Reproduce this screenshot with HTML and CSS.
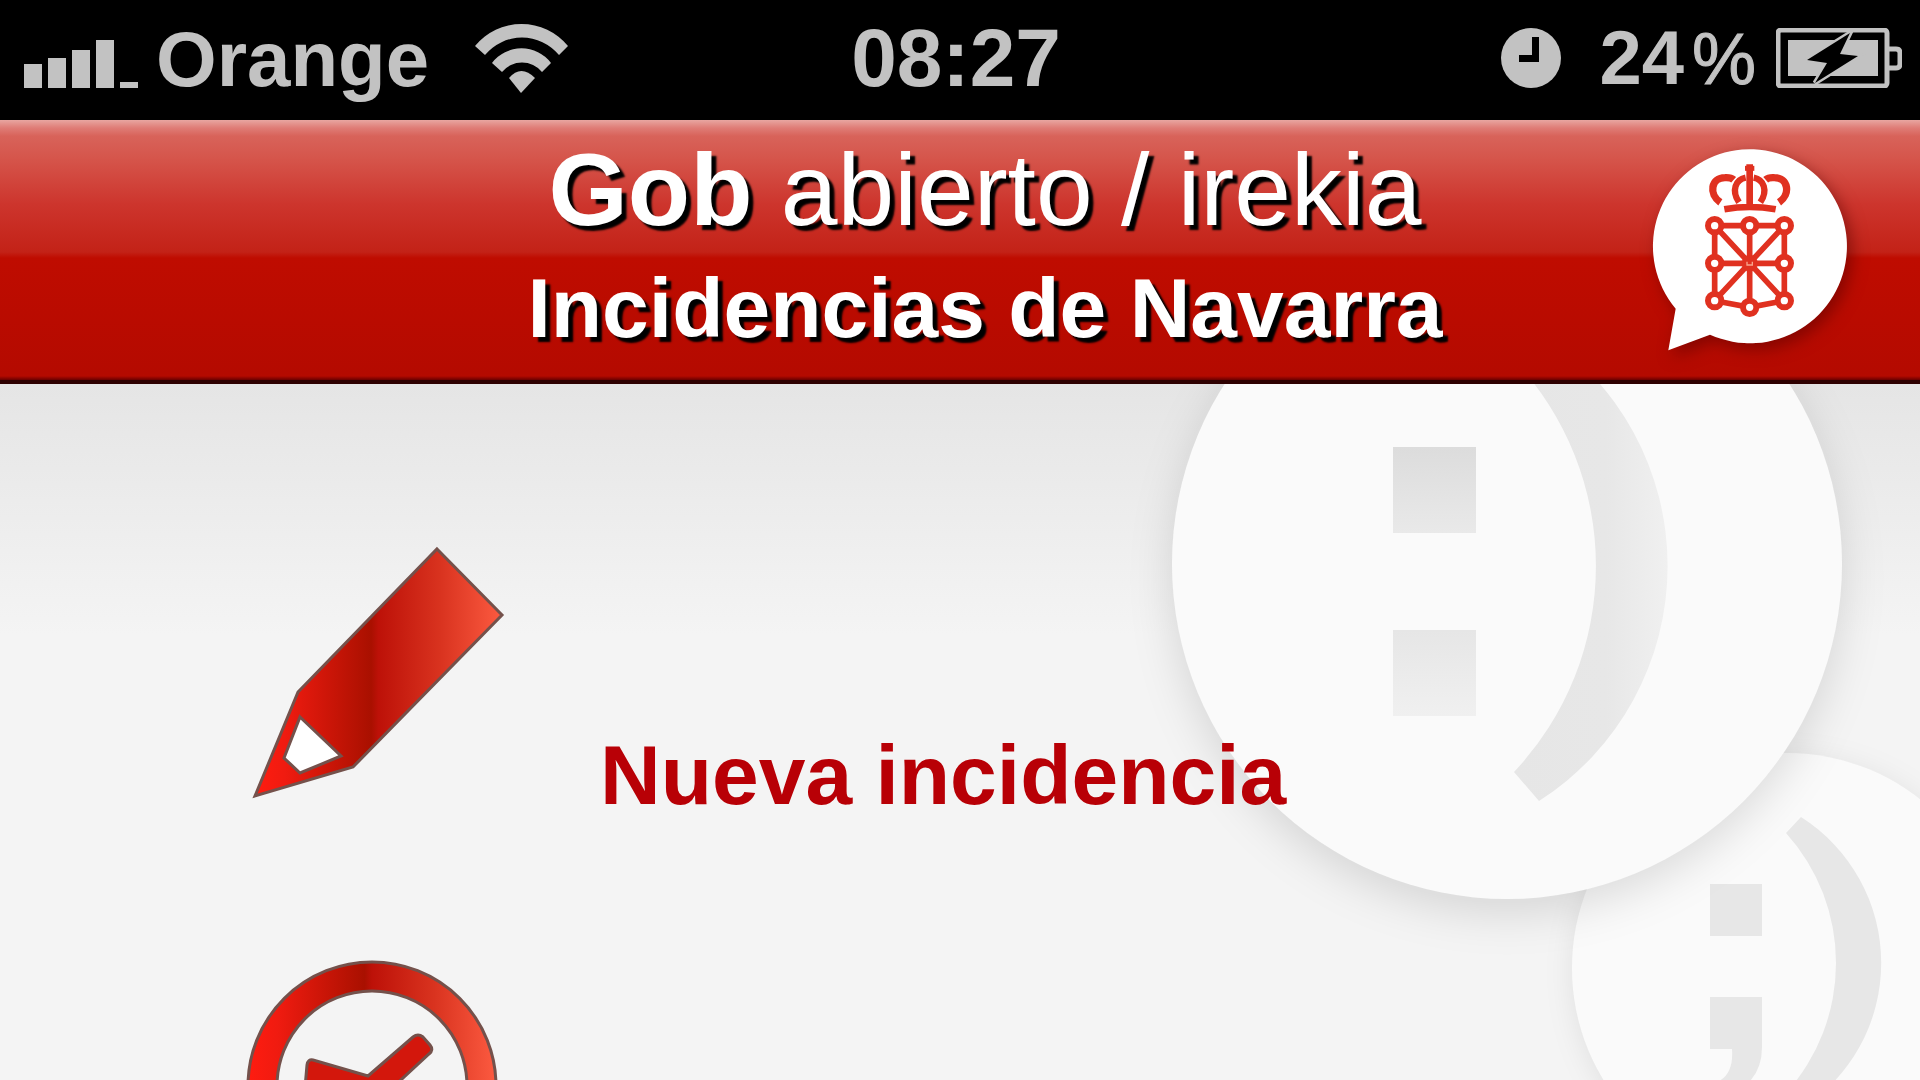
FILE: index.html
```html
<!DOCTYPE html>
<html lang="es">
<head>
    <meta charset="UTF-8">
    <meta name="viewport" content="width=device-width, initial-scale=1.0">
    <title>Incidencias de Navarra</title>
    <link rel="stylesheet" href="styles.css">
</head>
<body>
    <div class="status-bar">
        <div class="status-left">
            <svg class="signal" viewBox="24 27 114 60" aria-hidden="true">
                <path d="M24 63h18v24H24zM48 57h18v30H48zM72 49h18v38H72zM96 39h18v48H96zM120 81h18v6h-18z"/>
            </svg>
            <span class="carrier">Orange</span>
            <svg class="wifi" viewBox="475 24 94 70" aria-hidden="true">
                <path d="M475 47A60 60 0 0 1 568 47L559 56A48 48 0 0 0 485 56z"/>
                <path d="M492 64A37 37 0 0 1 551 64L542 73A26 26 0 0 0 502 73z"/>
                <path d="M509 79Q521 65 535 79L521 94z"/>
            </svg>
        </div>
        <span class="time">08:27</span>
        <div class="status-right">
            <svg class="alarm" viewBox="0 0 60 60" aria-hidden="true">
                <circle cx="30" cy="30" r="30"/>
                <path class="hands" d="M31 9h7v25H18v-7h13z"/>
            </svg>
            <span class="charge">24<span class="percent">%</span></span>
            <svg class="battery" viewBox="1776 27 126 60" aria-hidden="true">
                <rect class="case" x="1778" y="29" width="109" height="56" rx="3"/>
                <path class="case" d="M1889 48h7q4 0 4 4v11q0 4-4 4h-7"/>
                <path d="M1788 39h90v36h-90z"/>
                <path class="bolt-edge" d="M1850 32L1807 59 1827 62 1815 82 1858 55 1840 53z"/>
                <path class="bolt" d="M1850 32L1807 59 1827 62 1815 82 1858 55 1840 53z"/>
            </svg>
        </div>
    </div>

    <header class="header">
        <h1 class="title">
            <span class="brand"><b>Gob</b> abierto / irekia</span>
            <span class="subtitle">Incidencias de Navarra</span>
        </h1>
        <svg class="logo" viewBox="98 83 585 609" role="img" aria-label="Gobierno de Navarra">
            <path class="bubble" d="M172 565A291 291 0 1 1 275 643L150 690z"/>
            <g class="crest">
                <path d="M394 132V252M318 267Q394 253 472 267" stroke-width="20"/>
                <path d="M306 246C270 222 278 172 320 172Q338 171 346 178M482 246C518 222 510 172 468 172Q450 171 442 178" stroke-width="22"/>
                <path d="M362 246C338 210 352 178 382 172M426 246C450 210 436 178 406 172" stroke-width="19"/>
                <path d="M380 144h28" stroke-width="15"/>
                <path d="M289 316H498V541L394 561 289 541zM394 316V561M289 429H498M289 316L498 541M498 316L289 541" stroke-width="17"/>
                <g class="links">
                    <circle cx="289" cy="316" r="20"/>
                    <circle cx="394" cy="316" r="20"/>
                    <circle cx="498" cy="316" r="20"/>
                    <circle cx="289" cy="429" r="20"/>
                    <circle cx="498" cy="429" r="20"/>
                    <circle cx="289" cy="541" r="20"/>
                    <circle cx="394" cy="561" r="20"/>
                    <circle cx="498" cy="541" r="20"/>
                </g>
                <circle class="gem" cx="394" cy="429" r="24"/>
                <path d="M386 424v10h16v-10" stroke="#f7a58d" stroke-width="4"/>
            </g>
        </svg>
    </header>

    <main class="content">
        <svg class="smileys" viewBox="1140 384 780 800" aria-hidden="true">
            <defs>
                <linearGradient id="eye" x1="0" y1="0" x2="0" y2="1">
                    <stop offset="0" stop-color="#dcdcdc"/>
                    <stop offset="1" stop-color="#e9e9e9"/>
                </linearGradient>
                <linearGradient id="eyeLow" x1="0" y1="0" x2="0" y2="1">
                    <stop offset="0" stop-color="#e6e6e6"/>
                    <stop offset="1" stop-color="#f0f0f0"/>
                </linearGradient>
                <linearGradient id="mouth" x1="0" y1="0" x2="1" y2="0">
                    <stop offset="0" stop-color="#e6e6e6"/>
                    <stop offset="0.6" stop-color="#e7e7e7"/>
                    <stop offset="1" stop-color="#f0f0f0"/>
                </linearGradient>
            </defs>
            <circle class="face face-small" cx="1787" cy="968" r="215"/>
            <g fill="#e7e7e7">
                <path d="M1710 884h52v52h-52z"/>
                <path d="M1710 997h52v50q0 42-48 52v-16q20-6 18-34h-22z"/>
                <path d="M1801 817A173 173 0 0 1 1801 1109L1786 1093A194 194 0 0 0 1786 833z"/>
            </g>
            <circle class="face" cx="1507" cy="564" r="335"/>
            <path fill="url(#eye)" d="M1393 447h83v86h-83z"/>
            <path fill="url(#eyeLow)" d="M1393 630h83v86h-83z"/>
            <path fill="url(#mouth)" d="M1539 331A279 279 0 0 1 1539 801L1514 772A300 300 0 0 0 1514 360z"/>
        </svg>

        <ul class="menu">
            <li>
                <a class="menu-item" href="#nueva">
                    <svg class="menu-icon" viewBox="250 545 256 260" aria-hidden="true">
                        <defs>
                            <linearGradient id="red" x1="0" y1="0" x2="1" y2="0">
                                <stop offset="0" stop-color="#ff1c10"/>
                                <stop offset="0.12" stop-color="#f01b10"/>
                                <stop offset="0.47" stop-color="#a91000"/>
                                <stop offset="0.5" stop-color="#bd1108"/>
                                <stop offset="0.75" stop-color="#d9331f"/>
                                <stop offset="1" stop-color="#fc5a40"/>
                            </linearGradient>
                        </defs>
                        <path class="shape" d="M437 549L502 615 353 767 255 796 298 692z"/>
                        <path class="wood" d="M300 717L341 756 300 773 284 758z"/>
                    </svg>
                    <span>Nueva incidencia</span>
                </a>
            </li>
            <li>
                <a class="menu-item" href="#incidencias" aria-label="Incidencias">
                    <svg class="menu-icon" viewBox="250 960 256 260" aria-hidden="true">
                        <path class="shape" fill-rule="evenodd" d="M248 1087a124 124 0 0 1 248 0a124 124 0 0 1-248 0zM277 1087a95 95 0 0 0 190 0a95 95 0 0 0-190 0z"/>
                        <path class="hand" d="M313 1061L368 1077 413 1038Q418 1034 423 1038L430 1046Q434 1051 429 1055L365 1114 304 1100 307 1066Q308 1060 313 1061z"/>
                    </svg>
                </a>
            </li>
        </ul>
    </main>
</body>
</html>
```

FILE: styles.css
```css
* {
    box-sizing: border-box;
}
body {
    display: flex;
    flex-direction: column;
    height: 100vh;
    margin: 0;
    overflow: hidden;
    font-family: "Liberation Sans", Arial, sans-serif;
    background-color: #f4f4f4;
}

/* status bar */
.status-bar {
    display: grid;
    grid-template-columns: 1fr auto 1fr;
    align-items: center;
    flex-shrink: 0;
    padding: 0 18px 6px 24px;
    height: 120px;
    background-color: #000;
    color: #c2c2c2;
    fill: #c2c2c2;
    font-weight: bold;
    line-height: 114px;
}
.status-left, .status-right {
    display: flex;
    align-items: center;
}
.status-right {
    justify-content: flex-end;
}
.signal {
    width: 114px;
    height: 60px;
    margin-right: 18px;
}
.carrier {
    padding-top: 2px;
    font-size: 78px;
}
.wifi {
    width: 94px;
    height: 70px;
    margin-left: 46px;
}
.time {
    margin-right: 14px;
    font-size: 82px;
}
.alarm {
    width: 60px;
    height: 60px;
    margin-right: 38px;
}
.hands, .bolt {
    fill: #000;
}
.charge {
    font-size: 76px;
}
.percent {
    margin-left: 8px;
    font-size: 72px;
    font-weight: normal;
    -webkit-text-stroke: 1px #c2c2c2;
}
.battery {
    width: 126px;
    height: 60px;
    margin-left: 20px;
}
.case {
    fill: none;
    stroke: #c2c2c2;
    stroke-width: 5;
}
.bolt-edge {
    stroke: #c2c2c2;
    stroke-width: 5;
}

/* header */
.header {
    display: grid;
    grid-template-columns: 1fr auto 1fr;
    flex-shrink: 0;
    padding: 6px 74px 18px 124px;
    border-bottom: 4px solid #2e0000;
    background: linear-gradient(#e8a6a1 0, #df7c76 8px, #d8635a 16px, #d5544a 40px, #cd352d 84px, #c32217 132px, #bf0c00 138px, #b40a00 256px, #6a0000 100%);
}
.title {
    grid-column: 2;
    margin: 0;
    color: #fff;
    text-align: center;
    text-shadow: 5px 5px 2px #000;
    white-space: nowrap;
}
.brand, .subtitle {
    display: block;
}
.brand {
    font-size: 102px;
    font-weight: normal;
    line-height: 128px;
}
.subtitle {
    font-size: 84px;
    line-height: 108px;
}
.logo {
    justify-self: end;
    width: 195px;
    height: 203px;
    margin-top: 22px;
    overflow: visible;
    filter: drop-shadow(5px 6px 8px rgba(80, 0, 0, 0.5));
}
.bubble {
    fill: #fff;
}
.crest {
    fill: none;
    stroke: #e03120;
}
.links {
    fill: #fff;
    stroke-width: 18;
}
.gem {
    fill: #e03120;
}

/* content */
.content {
    position: relative;
    flex: 1;
    overflow: hidden;
    background: linear-gradient(#e5e5e5, #f4f4f4 250px);
}
.smileys {
    position: absolute;
    top: 0;
    right: 0;
    width: 780px;
    height: 800px;
    overflow: visible;
}
.face {
    fill: #fafafa;
    filter: drop-shadow(0 14px 22px rgba(0, 0, 0, 0.12));
}
.face-small {
    filter: drop-shadow(0 4px 14px rgba(0, 0, 0, 0.08));
}
.menu {
    position: relative;
    display: flex;
    flex-direction: column;
    gap: 154px;
    margin: 0;
    padding: 161px 0 0 250px;
    list-style: none;
}
.menu-item {
    display: flex;
    align-items: flex-end;
    gap: 94px;
    color: #b80006;
    font-size: 84px;
    font-weight: bold;
    line-height: 60px;
    text-decoration: none;
}
.menu-icon {
    width: 256px;
    height: 260px;
    overflow: visible;
}
.shape {
    fill: url(#red);
    stroke: #74514b;
    stroke-width: 3;
}
.hand {
    fill: #d3170c;
    stroke: #74514b;
    stroke-width: 3;
}
.wood {
    fill: #fff;
    stroke: #74514b;
    stroke-width: 3;
}
```
